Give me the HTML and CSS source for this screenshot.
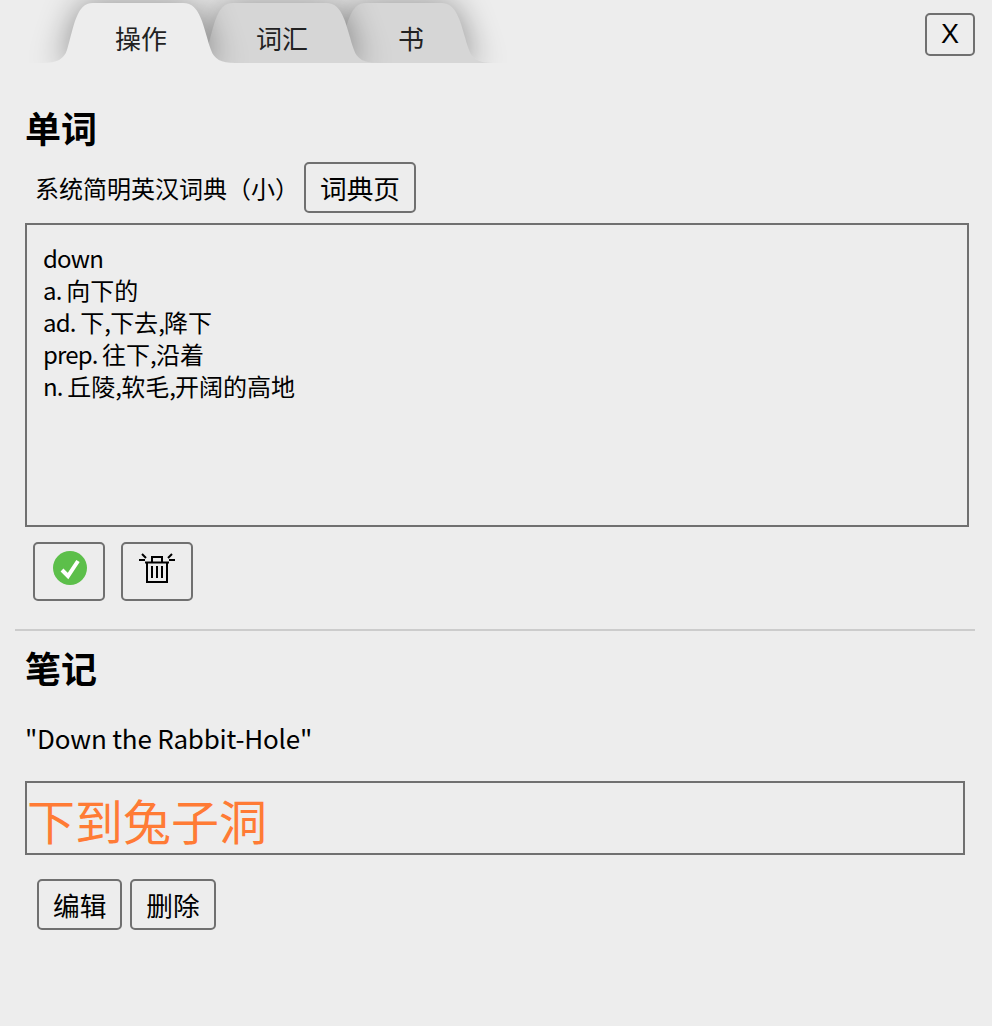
FILE: index.html
```html
<!DOCTYPE html>
<html>
<head>
    <title>单词</title>
    <link rel="stylesheet" href="styles.css">
</head>
<body>
    <div class="top-bar">
        <div class="tabs">
            <div class="tab tab-active">
                <svg class="tab-shape" viewBox="0 0 192 60"><path d="M0 60 C14 60 21 56 24 47 C31 24 33 0 50 0 L140 0 C158 0 160 24 168 47 C171 56 178 60 192 60 Z"/></svg>
                <span class="tab-label">操作</span>
            </div>
            <div class="tab tab-mid">
                <svg class="tab-shape" viewBox="0 0 195 60"><path d="M0 60 C14 60 21 56 24 47 C31 24 33 0 50 0 L143 0 C161 0 163 24 171 47 C174 56 181 60 195 60 Z"/></svg>
                <span class="tab-label">词汇</span>
            </div>
            <div class="tab tab-last">
                <svg class="tab-shape" viewBox="0 0 177 60"><path d="M0 60 C14 60 21 56 24 47 C31 24 33 0 50 0 L125 0 C143 0 145 24 153 47 C156 56 163 60 177 60 Z"/></svg>
                <span class="tab-label">书</span>
            </div>
        </div>
        <button class="btn btn-close">X</button>
    </div>

    <div class="section">
        <h2>单词</h2>
        <div class="dict-row">
            <span class="dict-name">系统简明英汉词典（小）</span>
            <button class="btn">词典页</button>
        </div>
        <div class="definition">
            <span class="latin">down</span><br>
            <span class="latin">a. </span>向下的<br>
            <span class="latin">ad. </span>下<span class="latin">,</span>下去<span class="latin">,</span>降下<br>
            <span class="latin">prep. </span>往下<span class="latin">,</span>沿着<br>
            <span class="latin">n. </span>丘陵<span class="latin">,</span>软毛<span class="latin">,</span>开阔的高地
        </div>
        <div class="icon-row">
            <button class="btn btn-icon">
                <svg class="check-icon" width="36" height="36" viewBox="0 0 36 36">
                    <circle cx="18" cy="18" r="17" fill="#5cbf4a"/>
                    <path d="M10 20 L16 26 L26 11" fill="none" stroke="#fff" stroke-width="4"/>
                </svg>
            </button>
            <button class="btn btn-icon">
                <svg width="36" height="30" viewBox="0 0 36 30" fill="none" stroke="#000">
                    <path d="M0 7 H6 M3 1 L7 5 M30 7 H36 M33 1 L29 5" stroke-width="2"/>
                    <path d="M6 9.500 H30 M13 9 V4 H23 V9" stroke-width="2"/>
                    <path d="M8 10 V29 H28 V10" stroke-width="2"/>
                    <path d="M13 13 V25 M18 13 V25 M23 13 V25" stroke-width="2"/>
                </svg>
            </button>
        </div>
    </div>

    <div class="section section-notes">
        <h2>笔记</h2>
        <p class="quote">"Down the Rabbit-Hole"</p>
        <div class="note">下到兔子洞</div>
        <div class="note-actions">
            <button class="btn">编辑</button>
            <button class="btn">删除</button>
        </div>
    </div>
</body>
</html>
```
FILE: styles.css
```css
body {
    margin: 0;
    height: 1026px;
    overflow: hidden;
    background-color: #ededed;
    color: #000;
    font-family: "Noto Sans CJK SC", "Noto Sans", sans-serif;
    font-size: 24px;
}
.top-bar {
    display: flex;
    justify-content: space-between;
    align-items: flex-start;
    height: 63px;
    padding-right: 17px;
}
.tabs {
    display: flex;
    width: 530px;
    height: 60px;
    padding-top: 3px;
    overflow: hidden;
}
.tab {
    position: relative;
    flex-shrink: 0;
    height: 60px;
    box-sizing: border-box;
    display: flex;
    justify-content: center;
    align-items: center;
    color: #222;
    font-size: 26px;
}
.tab-active {
    width: 192px;
    margin-left: 43px;
    padding: 8px 0 0 4px;
    z-index: 3;
}
.tab-mid {
    width: 195px;
    margin-left: -52px;
    padding: 8px 0 0 3px;
    z-index: 2;
}
.tab-last {
    width: 177px;
    margin-left: -62px;
    padding: 8px 0 0 13px;
    z-index: 1;
}
.tab-shape {
    position: absolute;
    top: 0;
    left: 0;
    width: 100%;
    height: 100%;
    filter: drop-shadow(0 0 16px rgba(0,0,0,0.4));
}
.tab-shape path {
    fill: #d6d6d6;
}
.tab-active .tab-shape path {
    fill: #ededed;
}
.tab-label {
    position: relative;
}
.btn {
    padding: 0 14px;
    height: 51px;
    border: 2px solid #707070;
    border-radius: 5px;
    background-color: #ededed;
    color: #000;
    font-family: inherit;
    font-size: 26.67px;
}
.btn-close {
    width: 50px;
    height: 43px;
    margin-top: 13px;
    padding: 0;
    font-family: "Liberation Sans", sans-serif;
    font-size: 27px;
}
.section {
    padding: 0 17px 0 25px;
}
h2 {
    margin: 0;
    font-size: 36px;
    font-weight: bold;
    line-height: 48px;
}
.top-bar + .section h2 {
    margin-top: 40px;
}
.dict-row {
    display: flex;
    align-items: center;
    gap: 5px;
    margin-top: 11px;
    padding-left: 10px;
}
.definition {
    width: 908px;
    height: 267px;
    margin-top: 10px;
    padding: 17px 16px 16px;
    border: 2px solid #707070;
    line-height: 32px;
}
.latin {
    letter-spacing: -0.8px;
}
.icon-row {
    display: flex;
    gap: 16px;
    margin-top: 15px;
    padding-left: 8px;
}
.btn-icon {
    width: 72px;
    height: 59px;
    padding: 0 0 7px;
    display: flex;
    justify-content: center;
    align-items: center;
}
.check-icon {
    margin-left: 2px;
}
.section-notes {
    margin: 28px 17px 0 15px;
    padding: 12px 0 0 10px;
    border-top: 2px solid #ccc;
}
.quote {
    margin: 27px 0 0;
    font-size: 26px;
    letter-spacing: -0.2px;
    line-height: 40px;
}
.note {
    width: 936px;
    height: 70px;
    margin-top: 23px;
    border: 2px solid #707070;
    color: #ff7b35;
    font-size: 48px;
    line-height: 72px;
}
.note-actions {
    display: flex;
    gap: 8px;
    margin-top: 24px;
    padding-left: 12px;
}
```
